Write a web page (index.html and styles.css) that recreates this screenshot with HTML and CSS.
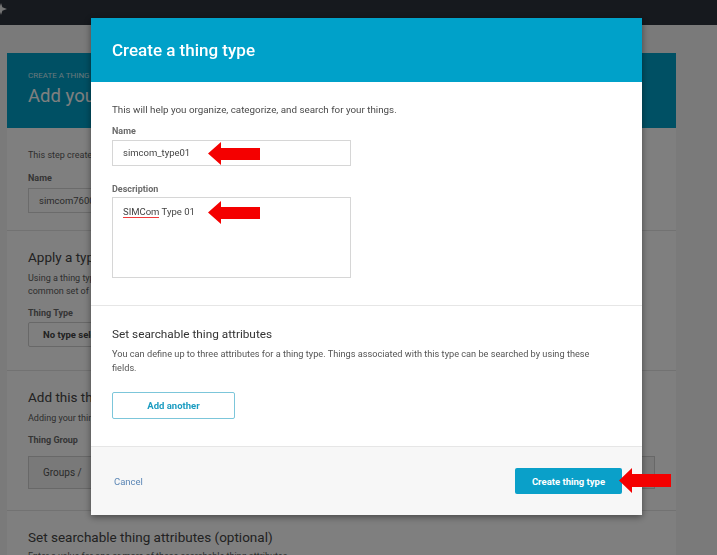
FILE: index.html
```html
<!DOCTYPE html>
<html lang="en">
<head>
  <meta charset="UTF-8" />
  <meta name="viewport" content="width=device-width, initial-scale=1.0"/>
  <title>Create a thing type</title>
  <link rel="stylesheet" href="styles.css">
</head>
<body>
  <div class="topbar">
    <svg class="logo" width="12" height="12" viewBox="0 0 12 12"><path d="M6 0l1.4 4.2L12 6 7.4 7.8 6 12 4.6 7.8 0 6l4.6-1.8z" fill="#e8e8e8"/></svg>
  </div>

  <div class="page">
    <div class="card">
      <div class="card-head">
        <div class="eyebrow">Create a thing</div>
        <div class="card-title">Add your device to the thing registry</div>
      </div>

      <div class="card-section first">
        <p>This step creates an entry in the thing registry and a thing shadow for your device.</p>
        <div class="label">Name</div>
        <div class="field">simcom7600</div>
      </div>

      <div class="card-section types">
        <h2>Apply a type to this thing</h2>
        <p>Using a thing type simplifies device management by providing consistent registry data for things that share a type. Types provide things with a<br>common set of attributes, which describe the identity and capabilities of your device, and a description.</p>
        <div class="label">Thing Type</div>
        <div class="select">No type selected</div>
      </div>

      <div class="card-section groups">
        <h2>Add this thing to a group</h2>
        <p>Adding your thing to a group allows you to manage devices remotely using jobs.</p>
        <div class="label">Thing Group</div>
        <div class="group-box">Groups /</div>
      </div>

      <div class="card-section last">
        <h2>Set searchable thing attributes (optional)</h2>
        <p>Enter a value for one or more of these searchable thing attributes.</p>
      </div>
    </div>
  </div>

  <div class="overlay"></div>

  <div class="modal">
    <div class="modal-head">
      <h2>Create a thing type</h2>
    </div>

    <div class="modal-section">
      <p class="intro">This will help you organize, categorize, and search for your things.</p>
      <div class="label">Name</div>
      <div class="input">
        simcom_type01
        <svg class="arrow arrow-name" width="52" height="23" viewBox="0 0 52 23"><polygon points="0,11.5 13,0 13,6 52,6 52,18 13,18 13,23" fill="#f40000"/></svg>
      </div>
      <div class="label label-desc">Description</div>
      <div class="textarea">
        <span class="typo">SIMCom</span> Type 01
        <svg class="arrow arrow-desc" width="52" height="23" viewBox="0 0 52 23"><polygon points="0,11.5 13,0 13,6 52,6 52,18 13,18 13,23" fill="#f40000"/></svg>
      </div>
    </div>

    <div class="modal-section attrs">
      <h3>Set searchable thing attributes</h3>
      <p>You can define up to three attributes for a thing type. Things associated with this type can be searched by using these fields.</p>
      <button class="btn-outline">Add another</button>
    </div>

    <div class="modal-foot">
      <a class="cancel">Cancel</a>
      <div class="submit-wrap">
        <button class="btn-primary">Create thing type</button>
        <svg class="arrow arrow-submit" width="52" height="25" viewBox="0 0 52 25"><polygon points="0,12.5 13,0 13,6 52,6 52,19 13,19 13,25" fill="#f40000"/></svg>
      </div>
    </div>
  </div>
</body>
</html>
```

FILE: styles.css
```css
html {
  overflow: hidden;
}

body {
  margin: 0;
  width: 717px;
  height: 555px;
  overflow: hidden;
  font-family: Roboto, 'Liberation Sans', sans-serif;
  background: #f4f4f4;
  color: #545b64;
}

p {
  margin: 0;
}

.topbar {
  height: 25px;
  background: #2c323c;
  position: relative;
}

.logo {
  position: absolute;
  left: -5px;
  top: 3px;
}

.page {
  padding: 28px 41px 0 7px;
}

.card {
  background: #fff;
}

.card-head {
  height: 75px;
  box-sizing: border-box;
  padding: 18px 21px 0;
  background: #00a1c9;
  color: #fff;
}

.eyebrow {
  font-size: 8px;
  line-height: 10px;
  text-transform: uppercase;
  color: #cfeef6;
}

.card-title {
  margin-top: 4px;
  font-size: 18.5px;
  line-height: 22px;
}

.card-section {
  padding: 17px 21px 21px;
  border-bottom: 1px solid #e4e4e4;
}

.card-section h2 {
  margin: 0 0 4px;
  font-size: 13.5px;
  line-height: 18px;
  font-weight: 400;
  color: #444;
}

.card-section p {
  font-size: 9px;
  line-height: 13px;
  color: #5c5c5c;
}

.card-section .label {
  margin: 9px 0 3px;
}

.card-section.first {
  padding-top: 21px;
  padding-bottom: 17px;
}

.card-section.types h2 {
  margin-bottom: 6px;
}

.card-section.types .label {
  margin: 8px 0 2px;
}

.card-section.types {
  padding-bottom: 23px;
}

.card-section.groups h2 {
  margin-bottom: 6px;
}

.card-section.groups .label {
  margin: 8px 0 9px;
}

.field {
  width: 560px;
  height: 25px;
  box-sizing: border-box;
  padding: 0 10px;
  border: 1px solid #d6d6d6;
  font-size: 9.5px;
  line-height: 23px;
  color: #555;
}

.select {
  width: 130px;
  height: 25px;
  box-sizing: border-box;
  padding: 0 14px;
  border: 1px solid #d0d0d0;
  border-radius: 2px;
  font-size: 9.5px;
  font-weight: 700;
  line-height: 23px;
  color: #444;
}

.group-box {
  width: 627px;
  height: 33px;
  box-sizing: border-box;
  padding: 0 14px;
  border: 1px solid #d0d0d0;
  background: #f2f2f2;
  font-size: 10px;
  line-height: 31px;
  color: #555;
}

.card-section.last {
  height: 28px;
  overflow: hidden;
  padding-bottom: 0;
  border-bottom: none;
}

.label {
  font-size: 9px;
  line-height: 14px;
  font-weight: 700;
  color: #6b6b6b;
}

.overlay {
  position: fixed;
  inset: 0;
  background: rgba(0, 0, 0, 0.5);
}

.modal {
  position: fixed;
  left: 91px;
  top: 18px;
  width: 551px;
  background: #fff;
  box-shadow: 0 2px 7px rgba(0, 0, 0, 0.45);
}

.modal-head {
  height: 64px;
  display: flex;
  align-items: center;
  padding: 0 21px;
  background: #00a1c9;
}

.modal-head h2 {
  margin: 0;
  font-size: 17px;
  font-weight: 500;
  color: #fff;
}

.modal-section {
  padding: 21px 21px 27px;
  border-bottom: 1px solid #e6e6e6;
}

.intro {
  font-size: 9.8px;
  line-height: 14px;
  color: #4a4a4a;
  margin-bottom: 7px;
}

.modal-section .label {
  margin-bottom: 2px;
}

.modal-section .label-desc {
  margin-top: 16px;
  margin-bottom: 1px;
}

.input,
.textarea {
  position: relative;
  width: 239px;
  box-sizing: border-box;
  padding: 0 10px;
  border: 1px solid #d6d6d6;
  font-size: 9.5px;
  color: #444;
}

.input {
  height: 26px;
  line-height: 24px;
}

.textarea {
  height: 81px;
  padding-top: 7px;
  line-height: 14px;
}

.typo {
  display: inline-block;
  line-height: 11px;
  border-bottom: 1px solid #f03a3a;
}

.arrow {
  position: absolute;
}

.arrow-name {
  left: 95px;
  top: 1px;
}

.arrow-desc {
  left: 95px;
  top: 3px;
}

.attrs {
  padding: 20px 21px 27px;
}

.attrs h3 {
  margin: 0 0 5px;
  font-size: 11.8px;
  line-height: 16px;
  font-weight: 400;
  color: #333;
}

.attrs p {
  max-width: 490px;
  font-size: 9.2px;
  line-height: 14px;
  color: #555;
  margin-bottom: 17px;
}

.btn-outline {
  width: 123px;
  height: 27px;
  border: 1px solid #7cc6da;
  border-radius: 2px;
  background: #fff;
  font-family: inherit;
  font-size: 9.5px;
  font-weight: 700;
  color: #1b9cc1;
}

.modal-foot {
  height: 68px;
  display: flex;
  align-items: center;
  justify-content: space-between;
  padding: 0 20px 0 23px;
  background: #f7f7f7;
}

.cancel {
  font-size: 9.5px;
  color: #5b86b5;
}

.submit-wrap {
  position: relative;
}

.btn-primary {
  display: block;
  width: 107px;
  height: 26px;
  border: none;
  border-radius: 2px;
  background: #0aa0c9;
  font-family: inherit;
  font-size: 9.5px;
  font-weight: 700;
  color: #fff;
}

.arrow-submit {
  left: 104px;
  top: 0;
}
```
